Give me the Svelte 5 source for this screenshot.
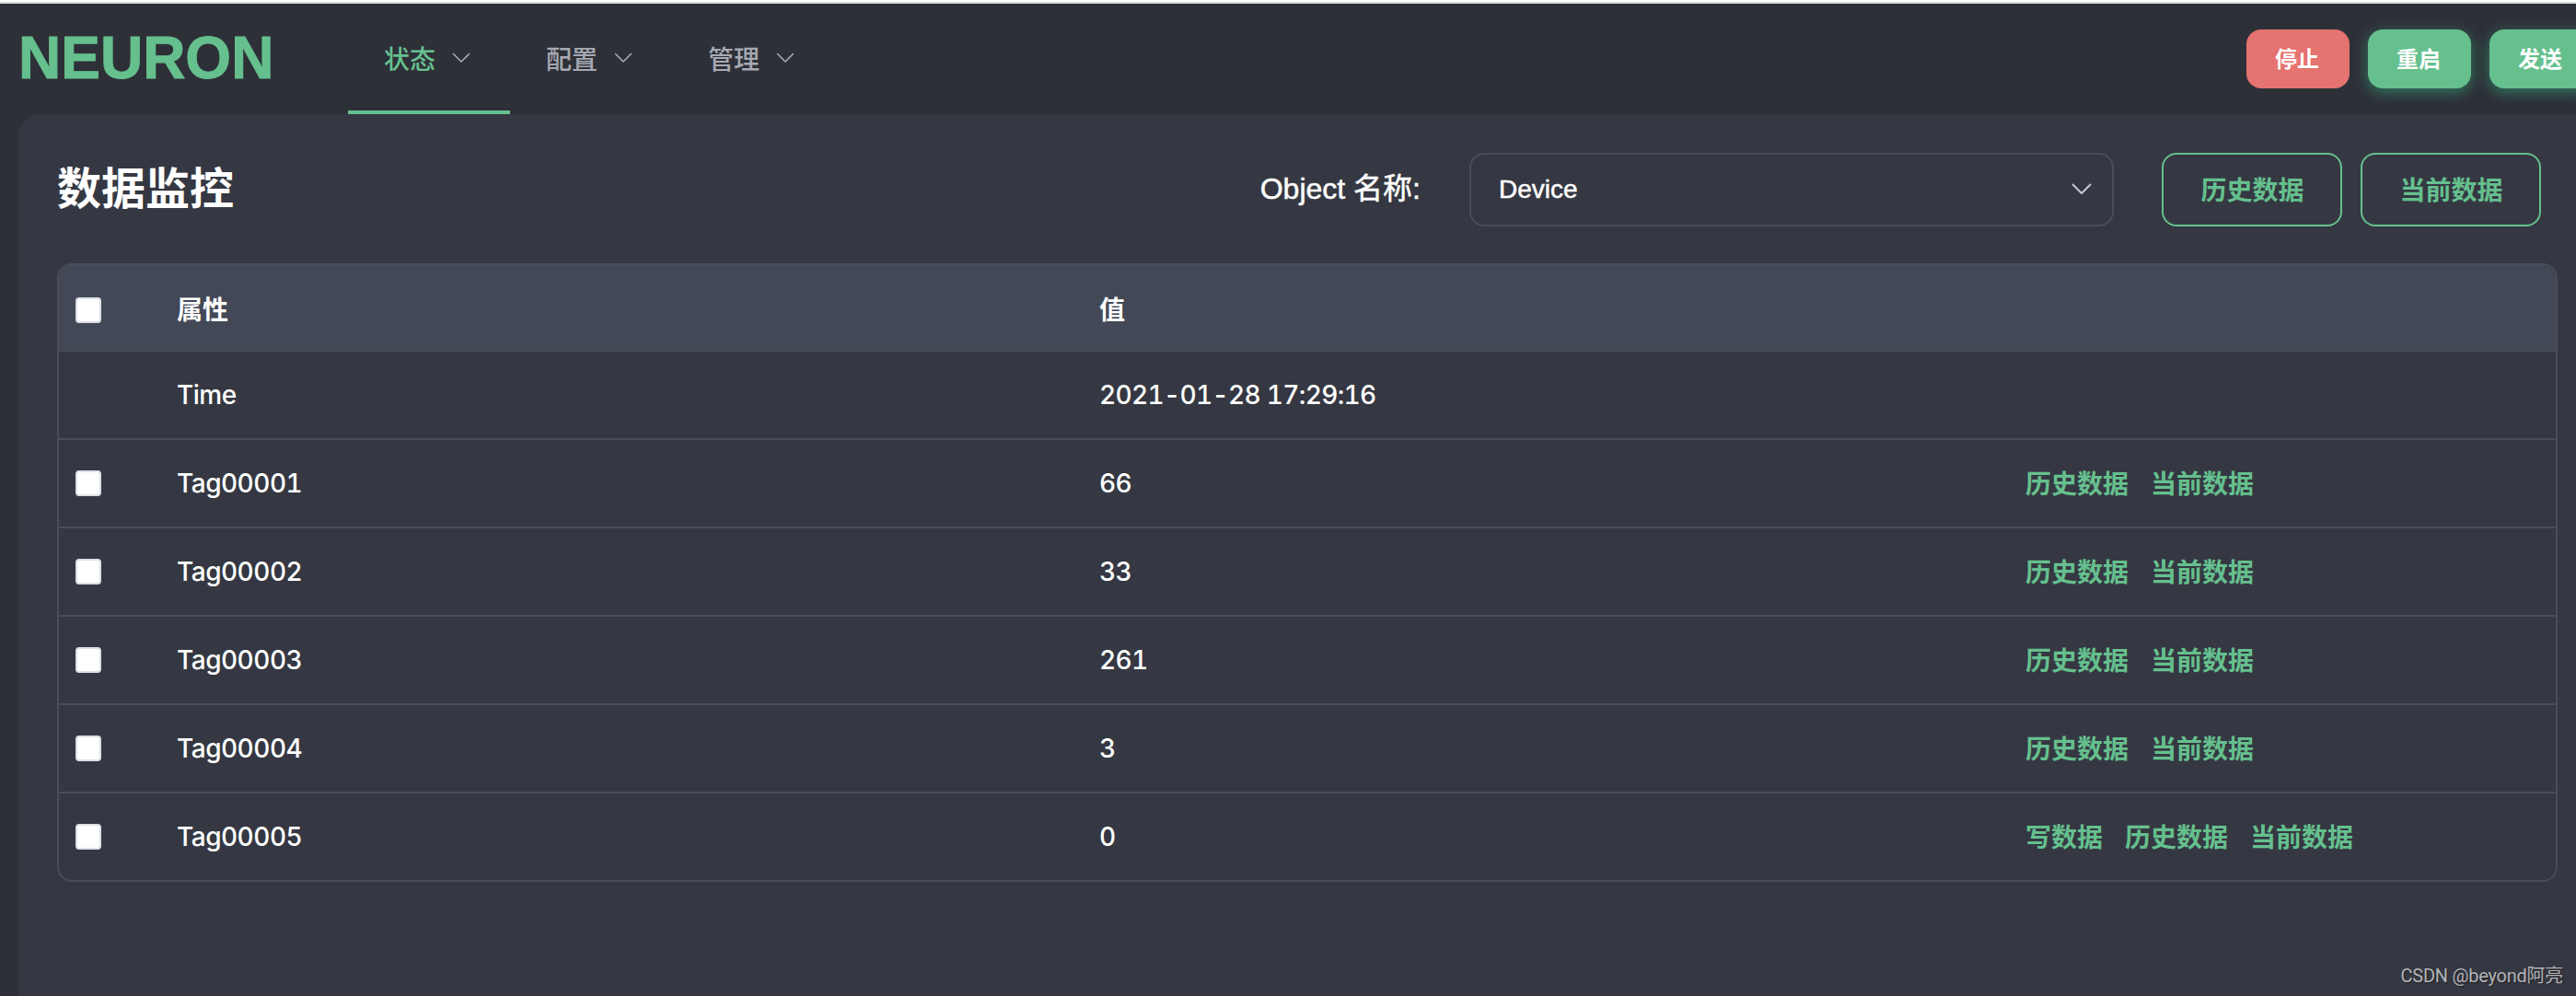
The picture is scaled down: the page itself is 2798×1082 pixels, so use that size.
<script lang="ts">
  interface Row {
    name: string;
    value: string;
    checkable: boolean;
    actions: string[];
  }

  const menus = ['状态', '配置', '管理'];
  const history = '历史数据';
  const current = '当前数据';

  let activeMenu = '状态';
  let objectName = 'Device';
  let selected: string[] = [];

  const rows: Row[] = [
    { name: 'Time', value: '2021-01-28 17:29:16', checkable: false, actions: [] },
    { name: 'Tag00001', value: '66', checkable: true, actions: [history, current] },
    { name: 'Tag00002', value: '33', checkable: true, actions: [history, current] },
    { name: 'Tag00003', value: '261', checkable: true, actions: [history, current] },
    { name: 'Tag00004', value: '3', checkable: true, actions: [history, current] },
    { name: 'Tag00005', value: '0', checkable: true, actions: ['写数据', history, current] },
  ];

  const tags = rows.filter((row) => row.checkable).map((row) => row.name);

  function toggleAll() {
    selected = selected.length === tags.length ? [] : [...tags];
  }
</script>

<div class="page">
  <header class="header">
    <div class="logo">NEURON</div>
    <nav class="menu">
      {#each menus as menu}
        <button class="menu-item" class:active={menu === activeMenu} on:click={() => (activeMenu = menu)}>
          <span>{menu}</span>
          <svg class="arrow" viewBox="0 0 24 24">
            <path d="M3.5 7.5 L12 16 L20.5 7.5" />
          </svg>
        </button>
      {/each}
    </nav>
    <div class="controls">
      <button class="control danger">停止</button>
      <button class="control">重启</button>
      <button class="control">发送</button>
    </div>
  </header>

  <main class="panel">
    <div class="toolbar">
      <h1>数据监控</h1>
      <span class="label">Object 名称:</span>
      <div class="select">
        <span>{objectName}</span>
        <svg class="arrow" viewBox="0 0 24 24">
          <path d="M2.5 6.5 L12 16 L21.5 6.5" />
        </svg>
      </div>
      <button class="outline first">{history}</button>
      <button class="outline">{current}</button>
    </div>

    <div class="table">
      <div class="row head">
        <div><input type="checkbox" checked={selected.length === tags.length} on:change={toggleAll} /></div>
        <div>属性</div>
        <div>值</div>
        <div></div>
      </div>
      {#each rows as row}
        <div class="row">
          <div>
            {#if row.checkable}
              <input type="checkbox" value={row.name} bind:group={selected} />
            {/if}
          </div>
          <div class="name">{row.name}</div>
          <div class="value">{row.value}</div>
          <div class="actions">
            {#each row.actions as action}
              <button class="link">{action}</button>
            {/each}
          </div>
        </div>
      {/each}
    </div>
  </main>

  <div class="watermark">CSDN @beyond阿亮</div>
</div>

<style>
  :global(body) {
    background: #2e3038;
    overflow: hidden;
  }

  .page {
    position: relative;
    box-sizing: border-box;
    height: 1082px;
    display: flex;
    flex-direction: column;
    overflow: hidden;
    border-top: 2px solid #fff;
    background: #2e3038;
    color: #fff;
    font-family: 'Liberation Sans', 'Noto Sans CJK SC', sans-serif;
    font-size: 28px;
  }

  button {
    margin: 0;
    padding: 0;
    border: none;
    background: none;
    color: inherit;
    font: inherit;
    white-space: nowrap;
    cursor: pointer;
  }

  .header {
    display: flex;
    flex: none;
    box-sizing: border-box;
    height: 122px;
    padding-left: 20px;
    border-top: 2px solid #dcdce0;
  }

  .logo {
    width: 358px;
    line-height: 118px;
    color: #65c08e;
    font-size: 64px;
    font-weight: bold;
    -webkit-text-stroke: 1px #65c08e;
  }

  .menu {
    display: flex;
  }

  .menu-item {
    display: flex;
    align-items: center;
    gap: 16px;
    box-sizing: border-box;
    width: 176px;
    padding: 1px 40px 0 39px;
    border-bottom: 4px solid transparent;
    color: #a7a9b3;
    font-weight: 500;
  }

  .menu-item.active {
    border-color: #65c08e;
    color: #65c08e;
  }

  .arrow {
    flex: none;
    width: 24px;
    height: 24px;
    fill: none;
    stroke: #a7a9b3;
    stroke-width: 1.6;
    stroke-linecap: round;
    stroke-linejoin: round;
  }

  .select .arrow {
    stroke: #c4c6d0;
    stroke-width: 2;
  }

  .controls {
    display: flex;
    gap: 20px;
    margin-left: auto;
    margin-right: -18px;
    padding-top: 28px;
  }

  .control {
    width: 112px;
    height: 64px;
    padding: 0 2px 4px 0;
    border-radius: 16px;
    background: #65c08e;
    box-shadow: 0 4px 16px rgba(52, 195, 136, 0.5);
    font-size: 24px;
    font-weight: bold;
  }

  .control.danger {
    background: #e5736f;
    box-shadow: none;
  }

  .panel {
    flex: 1;
    margin-left: 20px;
    padding: 42px 20px 0 42px;
    border-radius: 24px 0 0 0;
    background: #353842;
  }

  .toolbar {
    display: flex;
    align-items: center;
    height: 80px;
    padding-right: 18px;
    margin-bottom: 40px;
  }

  h1 {
    margin: 0 auto 0 0;
    padding-bottom: 10px;
    font-size: 48px;
    font-weight: bold;
  }

  .label {
    margin-right: 53px;
    padding-bottom: 8px;
    font-size: 32px;
    -webkit-text-stroke: 0.5px #fff;
  }

  .select {
    display: flex;
    align-items: center;
    justify-content: space-between;
    box-sizing: border-box;
    width: 700px;
    height: 80px;
    padding: 0 21px 0 30px;
    border: 2px solid #4a4d59;
    border-radius: 16px;
    -webkit-text-stroke: 0.5px #fff;
  }

  .outline {
    box-sizing: border-box;
    width: 196px;
    height: 80px;
    margin-left: 20px;
    padding: 0 0 3px 1px;
    border: 2px solid #65c08e;
    border-radius: 16px;
    color: #65c08e;
    font-weight: bold;
  }

  .outline.first {
    margin-left: 52px;
  }

  .table {
    overflow: hidden;
    border: 2px solid #4a4d59;
    border-radius: 16px;
    font-family: Inter, 'Noto Sans CJK SC', sans-serif;
    font-variant-numeric: tabular-nums;
  }

  .row {
    display: grid;
    grid-template-columns: 128px 1002px 1006px 1fr;
    align-items: center;
    box-sizing: border-box;
    height: 96px;
    border-bottom: 2px solid #4a4d59;
  }

  .row:last-child {
    height: 94px;
    border-bottom: none;
  }

  .head {
    height: 94px;
    padding-top: 2px;
    background: #434857;
    font-weight: bold;
  }

  .name,
  .value {
    font-weight: 500;
  }

  .name {
    letter-spacing: -0.5px;
  }

  .value {
    letter-spacing: -0.65px;
  }

  input {
    appearance: none;
    display: block;
    box-sizing: border-box;
    width: 28px;
    height: 28px;
    margin: 0 0 0 18px;
    border: 2px solid #dcdfe6;
    border-radius: 4px;
    background: #fff;
  }

  .head input {
    margin-top: 3px;
  }

  input:checked {
    background: #65c08e;
  }

  .actions {
    display: flex;
    gap: 24px;
    padding-bottom: 2px;
  }

  .link {
    color: #65c08e;
    font-weight: bold;
  }

  .watermark {
    position: absolute;
    right: 14px;
    bottom: 9px;
    color: #b4b5b9;
    font-family: Roboto, 'Noto Sans CJK SC', sans-serif;
    font-size: 20px;
    letter-spacing: -0.25px;
    text-shadow: 1px 1px 1px #1d1e23;
  }
</style>
